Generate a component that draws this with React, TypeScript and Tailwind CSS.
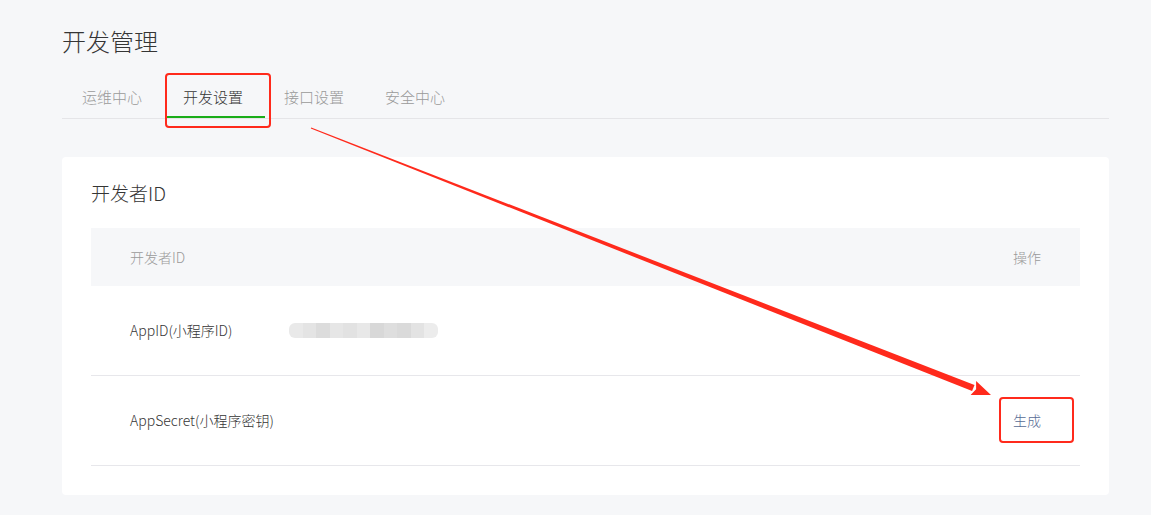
import React from 'react'

const tabs = ['运维中心', '开发设置', '接口设置', '安全中心']
const blur = ['#e9e9e9', '#e4e4e4', '#dcdcdc', '#e6e6e6', '#e2e2e2', '#e8e8e8', '#d8d8d8', '#dedede', '#dadada', '#e3e3e3', '#ececec']

// tapered annotation arrow from the tab box to the 生成 box
function Arrow() {
  const sx = 311, sy = 128, tx = 991, ty = 395
  const dx = tx - sx, dy = ty - sy
  const len = Math.hypot(dx, dy)
  const ux = dx / len, uy = dy / len
  const nx = -uy, ny = ux
  const bx = tx - 19 * ux, by = ty - 19 * uy
  const p = (x: number, y: number) => `${x.toFixed(1)},${y.toFixed(1)}`
  const shaft = [
    p(sx + 0.6 * nx, sy + 0.6 * ny),
    p(bx + 3.2 * nx, by + 3.2 * ny),
    p(bx - 3.2 * nx, by - 3.2 * ny),
    p(sx - 0.6 * nx, sy - 0.6 * ny),
  ].join(' ')
  const head = [p(tx, ty), p(bx + 7.5 * nx, by + 7.5 * ny), p(bx + 3 * ux, by + 3 * uy), p(bx - 7.5 * nx, by - 7.5 * ny)].join(' ')
  return (
    <svg className="absolute left-0 top-0 pointer-events-none" width={1151} height={515}>
      <polygon points={shaft} fill="#ff2a1c" />
      <polygon points={head} fill="#ff2a1c" />
    </svg>
  )
}

export default function App() {
  return (
    <div className="relative w-[1151px] h-[515px] overflow-hidden bg-[#f6f7f9] text-[#353535] font-light" style={{ fontFamily: '"Noto Sans CJK SC", "Noto Sans", sans-serif' }}>
      <div className="w-[1047px] ml-[62px] pt-[24px]">
        <h1 className="text-[24px] leading-[34px] text-[#353535]">开发管理</h1>

        {/* tabs */}
        <div className="flex mt-[18px] border-b border-[#e5e5e8]">
          {tabs.map((t, i) => (
            <div key={t} className="relative pl-[20px] pr-[21px] h-[42px] flex items-center text-[15px]">
              <span className={i === 1 ? 'text-[#353535]' : 'text-[#9a9a9a]'}>{t}</span>
              {i === 1 && <div className="absolute left-[4px] right-[-1px] bottom-[0px] h-[2px] bg-[#1aad19]" />}
            </div>
          ))}
        </div>

        {/* card */}
        <div className="mt-[38px] bg-white rounded-[4px] px-[29px] pt-[24px] pb-[29px]">
          <h3 className="text-[19px] leading-[24px] text-[#353535]">开发者ID</h3>
          <div className="mt-[23px]">
            <div className="flex items-center justify-between h-[58px] bg-[#f6f7f9] px-[39px] text-[14px] text-[#9a9a9a]">
              <span>开发者ID</span>
              <span>操作</span>
            </div>
            <div className="flex items-center h-[90px] px-[39px] border-b border-[#e7e7eb] text-[14px]">
              <span className="w-[159px]">AppID(小程序ID)</span>
              <div className="flex h-[15px] w-[149px] rounded-[6px] overflow-hidden blur-[0.6px]">
                {blur.map((c, i) => (
                  <div key={i} className="flex-1" style={{ background: c }} />
                ))}
              </div>
            </div>
            <div className="flex items-center justify-between h-[90px] px-[39px] border-b border-[#e7e7eb] text-[14px]">
              <span>AppSecret(小程序密钥)</span>
              <span className="text-[#576b95]">生成</span>
            </div>
          </div>
        </div>
      </div>

      {/* annotations */}
      <div className="absolute left-[165px] top-[73px] w-[106px] h-[55px] border-2 border-[#ff2a1c] rounded-[4px]" />
      <div className="absolute left-[999px] top-[397px] w-[75px] h-[46px] border-2 border-[#ff2a1c] rounded-[4px]" />
      <Arrow />
    </div>
  )
}
